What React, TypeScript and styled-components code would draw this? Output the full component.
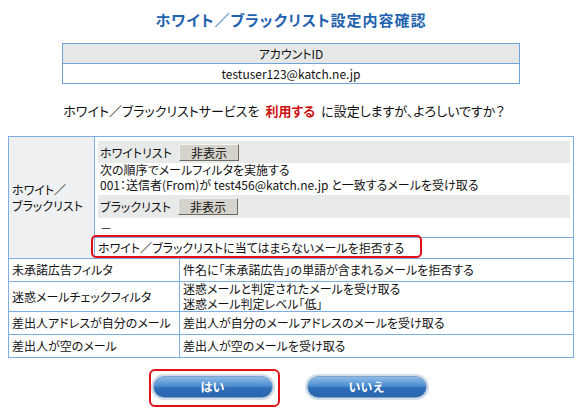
import React from "react";
import styled, { createGlobalStyle } from "styled-components";

const Global = createGlobalStyle`
  html, body { margin: 0; padding: 0; background: #fff; }
  body {
    font-family: "Noto Sans CJK JP", "Liberation Sans", sans-serif;
    font-size: 12px;
    color: #111;
    font-feature-settings: "palt";
  }
`;

const Page = styled.div`
  width: 582px;
  padding-top: 10px;
  display: flex;
  flex-direction: column;
  align-items: center;
`;

const Title = styled.h1`
  margin: 0;
  font-size: 15px;
  line-height: 20px;
  font-weight: bold;
  color: #1f62b0;
  letter-spacing: 1px;
`;

const AccountTable = styled.table`
  margin-top: 13px;
  width: 458px;
  border-collapse: collapse;
  border: 1px solid #5b97d8;
  td {
    border: 1px solid #6fa3dc;
    text-align: center;
    height: 19px;
    padding: 0;
    line-height: 19px;
  }
`;

const HeadCell = styled.td`
  background: #e6e8e8;
`;

const Question = styled.p`
  margin: 19px 0 0;
  padding-right: 14px;
  line-height: 16px;
  font-size: 13px;
`;

const Emph = styled.span`
  color: #cc1111;
  font-weight: bold;
  margin: 0 6px;
`;

const MainTable = styled.table`
  margin-top: 17px;
  width: 566px;
  border-collapse: collapse;
  table-layout: fixed;
  border: 1px solid #4f92dc;
`;

const Cell = styled.td<{ $label?: boolean; $tight?: boolean }>`
  border: 1px solid #7eaee0;
  padding: ${(p) => (p.$tight ? "0 3px" : "3px 3px")};
  line-height: ${(p) => (p.$tight ? "14.5px" : "16px")};
  vertical-align: middle;
  background: ${(p) => (p.$label ? "#eef0f1" : "#fff")};
  text-align: left;
`;

const ListCell = styled.td`
  border: 1px solid #7eaee0;
  padding: 4px 3px 2px;
  vertical-align: top;
`;

const Bar = styled.div<{ $h?: number; $mt?: number }>`
  background: #e8eaea;
  height: ${(p) => p.$h ?? 22}px;
  margin-top: ${(p) => p.$mt ?? 0}px;
  display: flex;
  align-items: center;
  gap: 7px;
  padding-left: 2px;
`;

const HideButton = styled.span`
  display: inline-flex;
  align-items: center;
  justify-content: center;
  width: 58px;
  height: 15px;
  background: #d6d3cc;
  border-top: 1px solid #f4f2ee;
  border-left: 1px solid #f4f2ee;
  border-right: 1px solid #6d6a64;
  border-bottom: 1px solid #6d6a64;
  font-size: 12px;
  line-height: 15px;
`;

const Lines = styled.div<{ $mt?: number; $lh?: number }>`
  line-height: ${(p) => p.$lh ?? 14}px;
  margin-top: ${(p) => p.$mt ?? 0}px;
  padding-left: 2px;
`;

const Anchor = styled.div`
  position: relative;
`;

const Highlight = styled.div`
  position: absolute;
  left: -7px;
  top: -5px;
  width: 327px;
  height: 19px;
  border: 2px solid #e3101a;
  border-radius: 5px;
  pointer-events: none;
`;

const Buttons = styled.div`
  margin-top: 11px;
  display: flex;
  gap: 23px;
  justify-content: center;
`;

const Frame = styled.div<{ $on?: boolean }>`
  border: 2px solid ${(p) => (p.$on ? "#e3101a" : "transparent")};
  border-radius: 6px;
  padding: 5px 5px 7px 2px;
`;

const PillButton = styled.button`
  width: 120px;
  height: 22px;
  border-radius: 11px;
  border: 1px solid #7da3c8;
  box-shadow: 0 0 0 2px #d3deea;
  background: linear-gradient(#8dbbe8 0%, #4d8dd0 45%, #2d6db8 55%, #2a66ad 100%);
  color: #fff;
  font-family: "Noto Sans CJK JP", sans-serif;
  font-weight: bold;
  font-size: 12px;
  line-height: 18px;
  padding: 0;
  display: block;
`;

export default function App() {
  return (
    <>
      <Global />
      <Page>
        <Title>ホワイト／ブラックリスト設定内容確認</Title>
        <AccountTable>
          <tbody>
            <tr>
              <HeadCell>アカウントID</HeadCell>
            </tr>
            <tr>
              <td>testuser123@katch.ne.jp</td>
            </tr>
          </tbody>
        </AccountTable>
        <Question>
          ホワイト／ブラックリストサービスを<Emph>利用する</Emph>に設定しますが、よろしいですか？
        </Question>
        <MainTable>
          <colgroup>
            <col style={{ width: 86 }} />
            <col style={{ width: 85 }} />
            <col />
          </colgroup>
          <tbody>
            <tr>
              <Cell $label rowSpan={2}>
                ホワイト／
                <br />
                ブラックリスト
              </Cell>
              <ListCell colSpan={2}>
                <Bar>
                  ホワイトリスト<HideButton>非表示</HideButton>
                </Bar>
                <Lines $lh={14.5}>
                  次の順序でメールフィルタを実施する
                  <br />
                  001：送信者(From)が test456@katch.ne.jp と一致するメールを受け取る
                </Lines>
                <Bar $h={23} $mt={3}>
                  ブラックリスト<HideButton>非表示</HideButton>
                </Bar>
                <Lines $mt={3}>－</Lines>
              </ListCell>
            </tr>
            <tr>
              <Cell colSpan={2} style={{ paddingTop: 2, paddingBottom: 2 }}>
                <Anchor>
                  ホワイト／ブラックリストに当てはまらないメールを拒否する
                  <Highlight />
                </Anchor>
              </Cell>
            </tr>
            <tr>
              <Cell colSpan={2}>未承諾広告フィルタ</Cell>
              <Cell>件名に「未承諾広告」の単語が含まれるメールを拒否する</Cell>
            </tr>
            <tr>
              <Cell colSpan={2}>迷惑メールチェックフィルタ</Cell>
              <Cell $tight>
                迷惑メールと判定されたメールを受け取る
                <br />
                迷惑メール判定レベル「低」
              </Cell>
            </tr>
            <tr>
              <Cell colSpan={2}>差出人アドレスが自分のメール</Cell>
              <Cell>差出人が自分のメールアドレスのメールを受け取る</Cell>
            </tr>
            <tr>
              <Cell colSpan={2}>差出人が空のメール</Cell>
              <Cell>差出人が空のメールを受け取る</Cell>
            </tr>
          </tbody>
        </MainTable>
        <Buttons>
          <Frame $on>
            <PillButton>はい</PillButton>
          </Frame>
          <Frame>
            <PillButton>いいえ</PillButton>
          </Frame>
        </Buttons>
      </Page>
    </>
  );
}
